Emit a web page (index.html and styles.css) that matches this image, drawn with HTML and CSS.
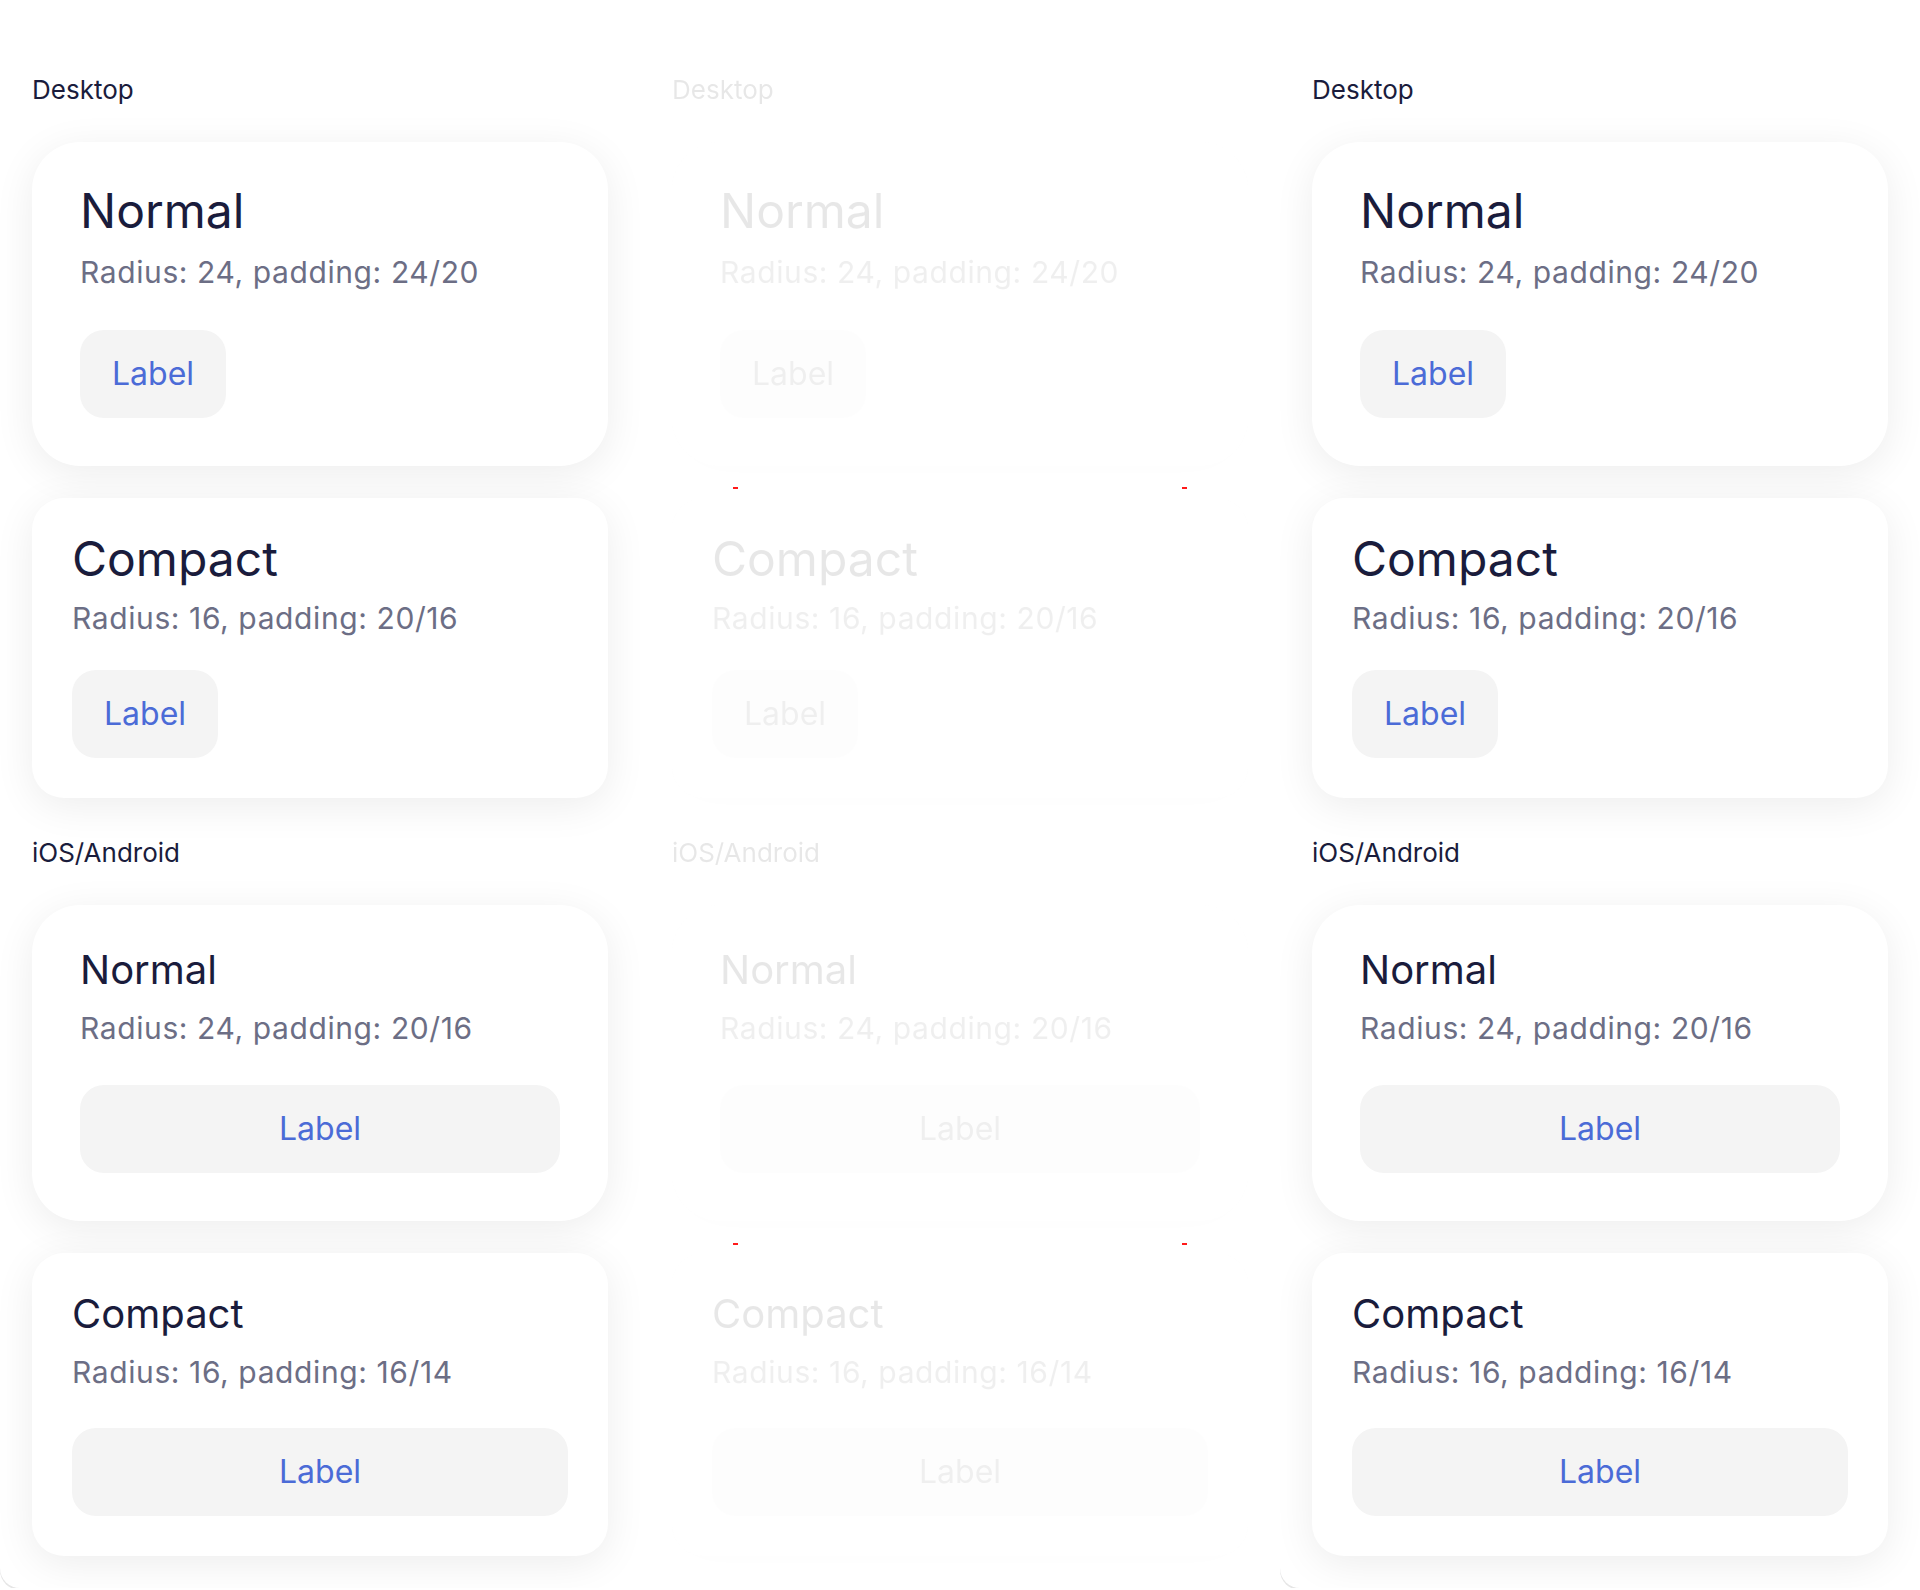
FILE: index.html
```html
<!DOCTYPE html>
<html lang="en">
<head>
<meta charset="utf-8">
<title>Card sizes</title>
<link rel="stylesheet" href="styles.css">
</head>
<body>
<div class="board">
  <section class="panel">
    <div class="group">
      <div class="group-title">Desktop</div>
      <div class="stack">
        <div class="card card--dn">
          <div class="card-title">Normal</div>
          <div class="card-sub">Radius: 24, padding: 24/20</div>
          <button class="btn">Label</button>
        </div>
        <div class="card card--dc">
          <div class="card-title">Compact</div>
          <div class="card-sub">Radius: 16, padding: 20/16</div>
          <button class="btn">Label</button>
        </div>
      </div>
    </div>
    <div class="group">
      <div class="group-title">iOS/Android</div>
      <div class="stack">
        <div class="card card--mn">
          <div class="card-title">Normal</div>
          <div class="card-sub">Radius: 24, padding: 20/16</div>
          <button class="btn btn--wide">Label</button>
        </div>
        <div class="card card--mc">
          <div class="card-title">Compact</div>
          <div class="card-sub">Radius: 16, padding: 16/14</div>
          <button class="btn btn--wide">Label</button>
        </div>
      </div>
    </div>
  </section>

  <section class="panel panel--ghost">
    <div class="panel-inner">
      <div class="group">
        <div class="group-title">Desktop</div>
        <div class="stack">
          <div class="card card--dn">
            <div class="card-title">Normal</div>
            <div class="card-sub">Radius: 24, padding: 24/20</div>
            <button class="btn">Label</button>
          </div>
          <div class="card card--dc">
            <div class="card-title">Compact</div>
            <div class="card-sub">Radius: 16, padding: 20/16</div>
            <button class="btn">Label</button>
          </div>
        </div>
      </div>
      <div class="group">
        <div class="group-title">iOS/Android</div>
        <div class="stack">
          <div class="card card--mn">
            <div class="card-title">Normal</div>
            <div class="card-sub">Radius: 24, padding: 20/16</div>
            <button class="btn btn--wide">Label</button>
          </div>
          <div class="card card--mc">
            <div class="card-title">Compact</div>
            <div class="card-sub">Radius: 16, padding: 16/14</div>
            <button class="btn btn--wide">Label</button>
          </div>
        </div>
      </div>
    </div>
    <span class="mark mark--tl"></span>
    <span class="mark mark--tr"></span>
    <span class="mark mark--bl"></span>
    <span class="mark mark--br"></span>
  </section>

  <section class="panel">
    <div class="group">
      <div class="group-title">Desktop</div>
      <div class="stack">
        <div class="card card--dn">
          <div class="card-title">Normal</div>
          <div class="card-sub">Radius: 24, padding: 24/20</div>
          <button class="btn">Label</button>
        </div>
        <div class="card card--dc">
          <div class="card-title">Compact</div>
          <div class="card-sub">Radius: 16, padding: 20/16</div>
          <button class="btn">Label</button>
        </div>
      </div>
    </div>
    <div class="group">
      <div class="group-title">iOS/Android</div>
      <div class="stack">
        <div class="card card--mn">
          <div class="card-title">Normal</div>
          <div class="card-sub">Radius: 24, padding: 20/16</div>
          <button class="btn btn--wide">Label</button>
        </div>
        <div class="card card--mc">
          <div class="card-title">Compact</div>
          <div class="card-sub">Radius: 16, padding: 16/14</div>
          <button class="btn btn--wide">Label</button>
        </div>
      </div>
    </div>
  </section>
</div>
</body>
</html>
```

FILE: styles.css
```css
* { box-sizing: border-box; }

html, body {
  margin: 0;
  padding: 0;
  background: #ffffff;
}

body {
  font-family: "Inter", "Noto Sans", "Liberation Sans", sans-serif;
  color: #1a1c3c;
}

.board {
  display: flex;
  width: 1920px;
  align-items: flex-start;
}

.panel {
  position: relative;
  width: 640px;
  flex: 0 0 640px;
  background: #ffffff;
  padding: 74px 32px 32px;
  border-radius: 0 0 0 20px;
  box-shadow: 0 2px 0 0 #e6e6e6;
}

.panel--ghost {
  box-shadow: none;
  padding: 0;
}

.panel-inner {
  padding: 74px 32px 32px;
  opacity: 0.1;
  filter: grayscale(1);
}

.group + .group {
  margin-top: 39px;
}

.group-title {
  font-size: 26px;
  line-height: 32px;
  color: #1a1c3c;
  margin-bottom: 36px;
}

.stack {
  display: flex;
  flex-direction: column;
  gap: 32px;
}

.card {
  display: flex;
  flex-direction: column;
  align-items: flex-start;
  background: #ffffff;
  box-shadow: 0 8px 40px rgba(0, 0, 0, 0.075);
}

.card-title {
  font-size: 48px;
  line-height: 57.6px;
  color: #1a1c3c;
}

.card-sub {
  font-size: 30px;
  line-height: 40px;
  color: #6c6e85;
  letter-spacing: 0.02em;
}

.btn {
  font-family: inherit;
  border: 0;
  height: 88px;
  padding: 0 32px;
  border-radius: 24px;
  background: #f4f4f4;
  color: #4b6bd7;
  font-size: 32px;
  line-height: 88px;
  text-align: center;
  cursor: pointer;
}

.btn--wide {
  align-self: stretch;
}

/* Desktop normal */
.card--dn {
  border-radius: 48px;
  padding: 40px 48px 48px;
}
.card--dn .card-sub { margin-top: 12px; }
.card--dn .btn { margin-top: 38px; }

/* Desktop compact */
.card--dc {
  border-radius: 32px;
  padding: 32px 40px 40px;
}
.card--dc .card-sub { margin-top: 11px; }
.card--dc .btn { margin-top: 32px; }

/* Mobile normal */
.card--mn {
  border-radius: 48px;
  padding: 41px 48px 48px;
}
.card--mn .card-title { font-size: 40px; line-height: 48px; }
.card--mn .card-sub { margin-top: 14px; }
.card--mn .btn { margin-top: 37px; }

/* Mobile compact */
.card--mc {
  border-radius: 32px;
  padding: 37px 40px 40px;
}
.card--mc .card-title { font-size: 40px; line-height: 48px; }
.card--mc .card-sub { margin-top: 14px; }
.card--mc .btn { margin-top: 36px; }

/* spacing markers */
.mark {
  position: absolute;
  width: 5px;
  height: 2px;
  background: #ff1a1a;
}
.mark--tl { left: 93px; top: 487px; }
.mark--tr { left: 542px; top: 487px; }
.mark--bl { left: 93px; top: 1243px; }
.mark--br { left: 542px; top: 1243px; }
```
